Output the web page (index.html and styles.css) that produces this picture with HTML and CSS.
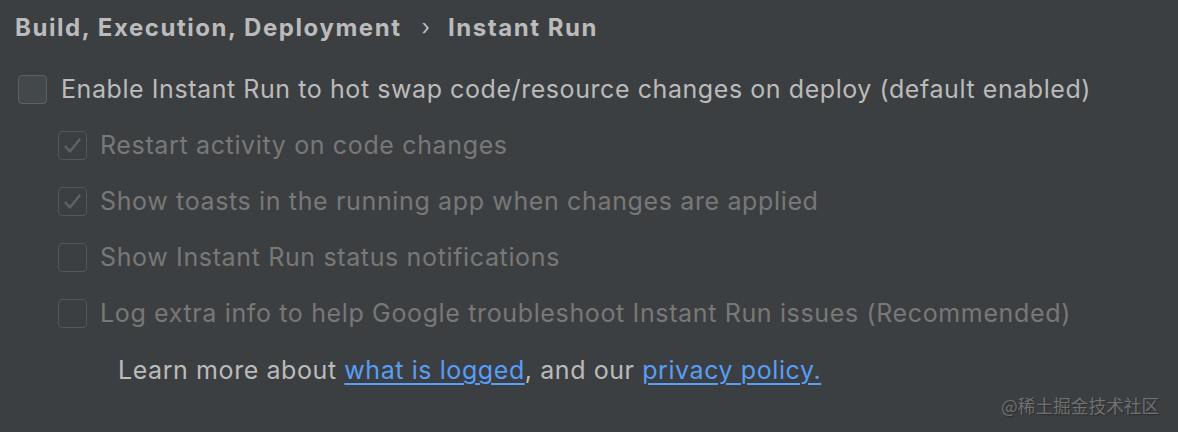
FILE: index.html
```html
<!DOCTYPE html>
<html>
<head>
<meta charset="utf-8">
<link rel="stylesheet" href="styles.css">
</head>
<body>
<div class="page">
  <div class="crumbs">
    <span>Build, Execution, Deployment</span>
    <span class="sep">›</span>
    <span>Instant Run</span>
  </div>
  <div class="row main">
    <span class="box"></span>
    <span class="label">Enable Instant Run to hot swap code/resource changes on deploy (default enabled)</span>
  </div>
  <div class="sub">
    <div class="row dis">
      <span class="box"><svg viewBox="0 0 29 29" width="29" height="29"><path d="M7.5 15.5 L12 20.5 L21.5 8.5" fill="none" stroke="#5f6163" stroke-width="2.4" stroke-linecap="round" stroke-linejoin="round"/></svg></span>
      <span class="label">Restart activity on code changes</span>
    </div>
    <div class="row dis">
      <span class="box"><svg viewBox="0 0 29 29" width="29" height="29"><path d="M7.5 15.5 L12 20.5 L21.5 8.5" fill="none" stroke="#5f6163" stroke-width="2.4" stroke-linecap="round" stroke-linejoin="round"/></svg></span>
      <span class="label">Show toasts in the running app when changes are applied</span>
    </div>
    <div class="row dis">
      <span class="box"></span>
      <span class="label">Show Instant Run status notifications</span>
    </div>
    <div class="row dis">
      <span class="box"></span>
      <span class="label">Log extra info to help Google troubleshoot Instant Run issues (Recommended)</span>
    </div>
    <div class="learn">Learn more about <a class="link">what is logged</a>, and our <a class="link">privacy policy.</a></div>
  </div>
  <div class="mark">@稀土掘金技术社区</div>
</div>
</body>
</html>
```
FILE: styles.css
```css
html, body {
  margin: 0;
  padding: 0;
  background: #3c3f41;
}
.page {
  position: relative;
  width: 1178px;
  height: 432px;
  font-family: Inter, "Noto Sans", sans-serif;
  color: #bbbbbb;
  overflow: hidden;
}
.crumbs {
  display: flex;
  align-items: center;
  padding: 10px 0 0 15px;
  height: 34px;
  font-size: 24px;
  font-weight: 700;
  letter-spacing: 1.55px;
  color: #bbbbbb;
  white-space: pre;
}
.crumbs .sep {
  font-weight: 400;
  letter-spacing: 0;
  margin: 0 18px 0 20px;
  font-size: 22px;
}
.row {
  display: flex;
  align-items: center;
  height: 56px;
  font-size: 25px;
  letter-spacing: 0.57px;
  white-space: pre;
}
.main {
  margin-top: 17px;
  padding-left: 18px;
}
.box {
  width: 27px;
  height: 27px;
  border: 1px solid #5e6162;
  border-radius: 4px;
  background: #43494a;
  box-sizing: content-box;
  margin-right: 14px;
  position: relative;
  flex: none;
}
.box svg {
  position: absolute;
  left: -1px;
  top: -1px;
}
.sub {
  padding-left: 58px;
}
.dis .box {
  background: #3c3f41;
  border-color: #545658;
  margin-right: 13px;
}
.dis .label {
  color: #787878;
  letter-spacing: 0.64px;
}
.learn {
  padding-left: 60px;
  height: 58px;
  display: flex;
  align-items: center;
  font-size: 25px;
  letter-spacing: 0.58px;
  color: #bbbbbb;
  white-space: pre;
}
.link {
  color: #589df6;
  text-decoration: underline;
  text-decoration-thickness: 2px;
  text-underline-offset: 4px;
}
.mark {
  position: absolute;
  left: 1001px;
  top: 392px;
  font-size: 17.7px;
  color: #6f7072;
  text-shadow: 1px 1px 1px #2a2b2c;
  font-family: "Noto Sans CJK SC", sans-serif;
}
```
